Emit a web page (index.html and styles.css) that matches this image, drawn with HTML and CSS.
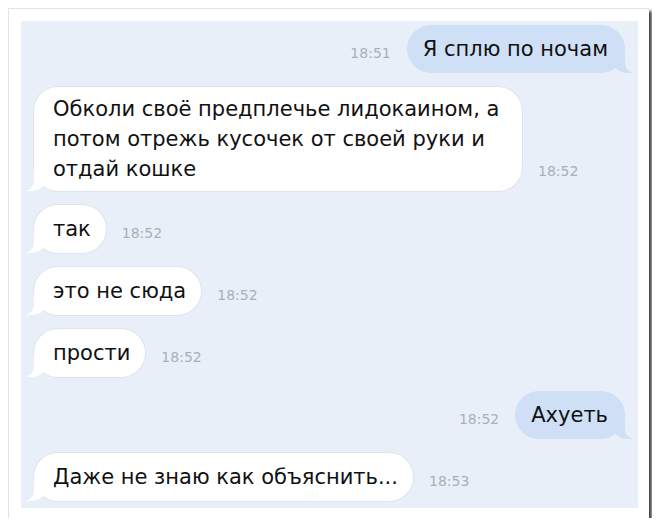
FILE: index.html
```html
<!DOCTYPE html>
<html lang="ru">
<head>
  <meta charset="UTF-8">
  <meta name="viewport" content="width=device-width, initial-scale=1.0">
  <title>Чат</title>
  <link rel="stylesheet" href="styles.css">
</head>
<body>

<div class="frame">
  <div class="chat">
    <div class="row out">
      <span class="time">18:51</span>
      <div class="bubble">Я сплю по ночам</div>
    </div>

    <div class="row in">
      <div class="bubble wide">Обколи своё предплечье лидокаином, а потом отрежь кусочек от своей руки и отдай кошке</div>
      <span class="time">18:52</span>
    </div>

    <div class="row in">
      <div class="bubble">так</div>
      <span class="time">18:52</span>
    </div>

    <div class="row in">
      <div class="bubble">это не сюда</div>
      <span class="time">18:52</span>
    </div>

    <div class="row in">
      <div class="bubble">прости</div>
      <span class="time">18:52</span>
    </div>

    <div class="row out">
      <span class="time">18:52</span>
      <div class="bubble">Ахуеть</div>
    </div>

    <div class="row in">
      <div class="bubble">Даже не знаю как объяснить...</div>
      <span class="time">18:53</span>
    </div>
  </div>
</div>

</body>
</html>
```

FILE: styles.css
```css
body {
  background-color: #fff;
  font-family: "DejaVu Sans", "Liberation Sans", sans-serif;
  margin: 8px;
}
.frame {
  width: 641px;
  height: 510px;
  box-sizing: border-box;
  padding: 12px 11px 10px 12px;
  background-color: #fff;
  border-top: 1px solid #e4e4e4;
  border-left: 1px solid #e4e4e4;
  box-shadow: 3px 3px 3px rgba(0, 0, 0, 0.75);
}
.chat {
  height: 100%;
  box-sizing: border-box;
  background-color: #e9eff8;
  padding: 4px 13px 10px 13px;
  display: flex;
  flex-direction: column;
  gap: 14px;
}
.row {
  display: flex;
  align-items: flex-end;
  gap: 16px;
}
.row.out {
  justify-content: flex-end;
}
.bubble {
  position: relative;
  font-size: 21px;
  line-height: 30px;
  color: #111;
  padding: 9px 15px 9px 19px;
  border-radius: 24px;
  background-color: #fff;
  box-shadow: 0 0 0 1px #dfe4ec;
}
.bubble.wide {
  box-sizing: border-box;
  max-width: 488px;
  padding: 7px 10px 7px 19px;
}
.out .bubble {
  background-color: #cfe0f6;
  box-shadow: none;
  padding: 9px 17px 9px 16px;
}
/* tails */
.in .bubble::before {
  content: "";
  position: absolute;
  bottom: 0;
  left: -7px;
  width: 20px;
  height: 20px;
  background-color: #fff;
  border-bottom-right-radius: 16px 14px;
}
.in .bubble::after {
  content: "";
  position: absolute;
  bottom: 0;
  left: -12px;
  width: 12px;
  height: 22px;
  background-color: #e9eff8;
  border-bottom-right-radius: 10px;
}
.out .bubble::before {
  content: "";
  position: absolute;
  bottom: 0;
  right: -7px;
  width: 20px;
  height: 20px;
  background-color: #cfe0f6;
  border-bottom-left-radius: 16px 14px;
}
.out .bubble::after {
  content: "";
  position: absolute;
  bottom: 0;
  right: -12px;
  width: 12px;
  height: 22px;
  background-color: #e9eff8;
  border-bottom-left-radius: 10px;
}
.time {
  font-size: 14px;
  color: #a7afba;
  margin-bottom: 12px;
  white-space: nowrap;
}
```
